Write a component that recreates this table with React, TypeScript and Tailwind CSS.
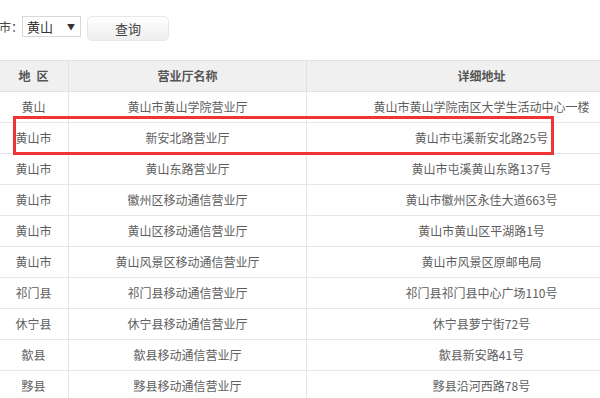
import React from 'react';

const rows: [string, string, string][] = [
  ['黄山', '黄山市黄山学院营业厅', '黄山市黄山学院南区大学生活动中心一楼'],
  ['黄山市', '新安北路营业厅', '黄山市屯溪新安北路25号'],
  ['黄山市', '黄山东路营业厅', '黄山市屯溪黄山东路137号'],
  ['黄山市', '徽州区移动通信营业厅', '黄山市徽州区永佳大道663号'],
  ['黄山市', '黄山区移动通信营业厅', '黄山市黄山区平湖路1号'],
  ['黄山市', '黄山风景区移动通信营业厅', '黄山市风景区原邮电局'],
  ['祁门县', '祁门县移动通信营业厅', '祁门县祁门县中心广场110号'],
  ['休宁县', '休宁县移动通信营业厅', '休宁县萝宁街72号'],
  ['歙县', '歙县移动通信营业厅', '歙县新安路41号'],
  ['黟县', '黟县移动通信营业厅', '黟县沿河西路78号'],
];

const font = { fontFamily: '"Noto Sans CJK SC", "Liberation Sans", sans-serif' };

export default function App() {
  return (
    <div className="relative w-[600px] h-[398px] overflow-hidden bg-white text-[12px] text-[#5e5e5e]" style={font}>
      {/* 查询栏 */}
      <div className="flex items-start h-[60px] pt-[16px]">
        <span className="w-[23px] h-[21px] leading-[21px] -ml-[1px] text-[#444]">市：</span>
        <div className="w-[59px] h-[21px] border border-[#d8d8d8] flex items-center justify-between pl-[4px] pr-[5px] text-[#333] text-[13px]">
          <span>黄山</span>
          <span className="text-[8px] text-[#333]">▼</span>
        </div>
        <button className="ml-[6px] w-[82px] h-[25px] rounded-[5px] border border-[#e8e8e8] bg-gradient-to-b from-white to-[#eeeeee] text-[13px] text-[#444]">
          查询
        </button>
      </div>

      {/* 营业厅表格 */}
      <table className="-ml-[2px] w-[658px] border-collapse table-fixed">
        <colgroup>
          <col className="w-[70px]" />
          <col className="w-[238px]" />
          <col className="w-[350px]" />
        </colgroup>
        <thead>
          <tr className="bg-[#f0f0f0] h-[31px]">
            <th className="border border-[#e2e2e2] font-bold text-[#555] p-0">
              地<span className="inline-block w-[6px]" />区
            </th>
            <th className="border border-[#e2e2e2] font-bold text-[#555] p-0">营业厅名称</th>
            <th className="border border-[#e2e2e2] font-bold text-[#555] p-0">详细地址</th>
          </tr>
        </thead>
        <tbody>
          {rows.map((r, i) => (
            <tr key={i} className="h-[31px]">
              <td className="border border-[#e6e6e6] text-center p-0">{r[0]}</td>
              <td className="border border-[#e6e6e6] text-center p-0">{r[1]}</td>
              <td className="border border-[#e6e6e6] text-center p-0">{r[2]}</td>
            </tr>
          ))}
        </tbody>
      </table>

      {/* 红框标注 */}
      <div className="absolute left-[13px] top-[116px] w-[541px] h-[39px] border-[3px] border-[#ee3535]" />
    </div>
  );
}
